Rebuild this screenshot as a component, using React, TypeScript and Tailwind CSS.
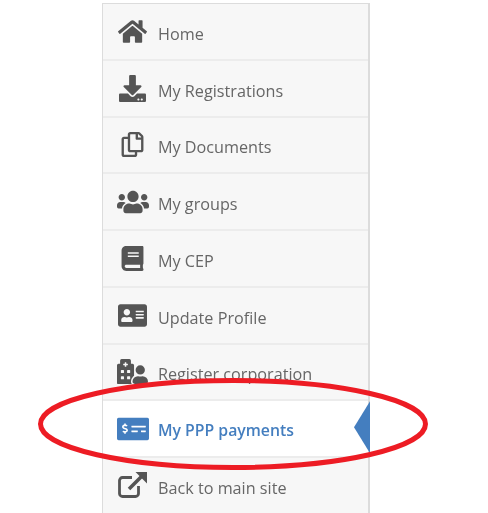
import React from "react";
import {
  FaHome,
  FaDownload,
  FaRegCopy,
  FaUsers,
  FaBook,
  FaAddressCard,
  FaHospitalUser,
  FaMoneyCheckAlt,
} from "react-icons/fa";

function BackIcon({ size }: { size: number }) {
  return (
    <svg width={size} height={size - 3} viewBox="0 0 29 26" fill="none" stroke="currentColor">
      <path d="M14 5.5H4.5a3 3 0 0 0-3 3v13a3 3 0 0 0 3 3h13a3 3 0 0 0 3-3V14" strokeWidth="2.8" />
      <path d="M11 17L24 4" strokeWidth="3.6" />
      <path d="M17.5 0H29V11.5Z" fill="currentColor" stroke="none" />
    </svg>
  );
}

const items = [
  { label: "Home", Icon: FaHome, size: 29 },
  { label: "My Registrations", Icon: FaDownload, size: 27 },
  { label: "My Documents", Icon: FaRegCopy, size: 25 },
  { label: "My groups", Icon: FaUsers, size: 32 },
  { label: "My CEP", Icon: FaBook, size: 25 },
  { label: "Update Profile", Icon: FaAddressCard, size: 29 },
  { label: "Register corporation", Icon: FaHospitalUser, size: 31 },
  { label: "My PPP payments", Icon: FaMoneyCheckAlt, size: 32, active: true },
  { label: "Back to main site", Icon: BackIcon, size: 29 },
];

export default function App() {
  return (
    <div className="relative w-[488px] h-[513px] overflow-hidden bg-white pl-[102px] pt-[3px] font-['Open_Sans',sans-serif]">
      <div className="w-[268px] h-[510px] bg-[#f7f7f7] border-l border-r-2 border-t border-[#dcdcdc] blur-[0.4px]">
        {items.map(({ label, Icon, size, active }) => (
          <div
            key={label}
            className={`relative flex items-center h-[56.75px] border-b-2 border-[#ececec] ${active ? "bg-white" : ""}`}
          >
            <div className={`flex w-[55px] shrink-0 items-center justify-center pl-[4px] ${active ? "text-[#447ebf]" : "text-[#555555]"}`}>
              <Icon size={size} />
            </div>
            <span className={`mt-[5px] leading-none ${active ? "text-[15.8px] text-[#447ebf] font-semibold" : "text-[16.2px] text-[#666666]"}`}>
              {label}
            </span>
            {active && (
              <div className="absolute right-[-2px] top-0 h-[52px] w-[16px] bg-[#447ebf] [clip-path:polygon(100%_0,100%_100%,0_50%)]" />
            )}
          </div>
        ))}
      </div>
      <svg className="absolute left-0 top-0" width="488" height="513" viewBox="0 0 488 513" fill="none">
        <ellipse cx="233" cy="424" rx="192.5" ry="43.5" stroke="#ed1c24" strokeWidth="5" />
      </svg>
    </div>
  );
}
